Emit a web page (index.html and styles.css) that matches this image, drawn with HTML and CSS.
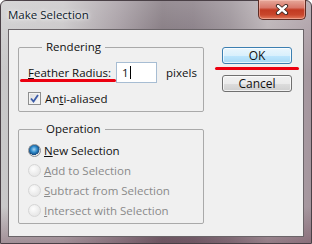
FILE: index.html
```html
<!DOCTYPE html>
<html lang="en">
<head>
  <meta charset="UTF-8">
  <title>Make Selection</title>
  <link rel="stylesheet" href="styles.css">
</head>
<body>
  <div class="window">
    <div class="titlebar">
      <span class="title">Make Selection</span>
      <div class="close">
        <svg width="14" height="11" viewBox="0 0 14 11">
          <path d="M3 2 L11 9 M11 2 L3 9" stroke="#3a2520" stroke-width="4.2" stroke-linecap="round"/>
          <path d="M3 2 L11 9 M11 2 L3 9" stroke="#ffffff" stroke-width="2.4" stroke-linecap="round"/>
        </svg>
      </div>
    </div>

    <div class="client">
      <div class="groups">
        <fieldset class="group render">
          <legend>Rendering</legend>
          <div class="row feather">
            <span class="label"><u>F</u>eather Radius:</span>
            <span class="field">1<span class="caret"></span></span>
            <span class="unit">pixels</span>
          </div>
          <div class="row check-row">
            <span class="checkbox">
              <svg width="9" height="9" viewBox="0 0 9 9">
                <path d="M1 4.5 L3.5 7.5 L8 1" fill="none" stroke="#3b5ba8" stroke-width="1.8"/>
              </svg>
            </span>
            <span>An<u>t</u>i-aliased</span>
          </div>
        </fieldset>

        <fieldset class="group operation">
          <legend>Operation</legend>
          <div class="row radio-row">
            <span class="radio checked"></span>
            <span><u>N</u>ew Selection</span>
          </div>
          <div class="row radio-row disabled">
            <span class="radio"></span>
            <span><u>A</u>dd to Selection</span>
          </div>
          <div class="row radio-row disabled">
            <span class="radio"></span>
            <span><u>S</u>ubtract from Selection</span>
          </div>
          <div class="row radio-row disabled">
            <span class="radio"></span>
            <span><u>I</u>ntersect with Selection</span>
          </div>
        </fieldset>
      </div>

      <div class="buttons">
        <button class="btn default">OK</button>
        <button class="btn">Cancel</button>
      </div>

      <!-- red marker strokes drawn over the dialog -->
      <div class="marker mark-feather"></div>
      <div class="marker mark-ok"></div>
    </div>
  </div>
</body>
</html>
```

FILE: styles.css
```css
* {
  box-sizing: border-box;
}
body {
  margin: 0;
  font-family: 'Open Sans', 'Noto Sans', sans-serif;
  font-size: 11.5px;
  color: #111;
  background: #fff;
}
.window {
  width: 312px;
  height: 244px;
  border: 1px solid #4a4046;
  border-radius: 6px 6px 0 0;
  padding: 0 7px 6px 7px;
  background:
    linear-gradient(180deg, rgba(255,255,255,0.25) 0%, rgba(255,255,255,0) 30%, rgba(0,0,0,0) 85%, rgba(90,40,60,0.35) 100%),
    linear-gradient(90deg, #c9c8c9 0%, #c4c1c3 20%, #9c9299 38%, #766a72 52%, #7a6e77 62%, #8f858c 74%, #b3aaae 86%, #a4959d 100%);
}
.titlebar {
  height: 28px;
  display: flex;
  align-items: flex-start;
  justify-content: space-between;
  margin-right: -2px;
}
.title {
  margin-top: 6px;
  color: #0d1a2a;
  text-shadow: 0 0 6px #fff, 0 0 3px #fff;
}
.close {
  width: 48px;
  height: 20px;
  margin-top: -1px;
  border: 1px solid #5e2c24;
  border-top: none;
  border-radius: 0 0 5px 5px;
  background: linear-gradient(180deg, #e6a89a 0%, #d8786a 40%, #c23a22 52%, #c9462c 78%, #e27a5c 100%);
  box-shadow: inset 0 0 0 1px rgba(255, 210, 200, 0.45);
  display: flex;
  align-items: center;
  justify-content: center;
}
.client {
  position: relative;
  height: 208px;
  border: 1px solid #6a6468;
  background: #f0f0f0;
  display: flex;
  padding: 9px 0 0 9px;
}
.groups {
  width: 186px;
  display: flex;
  flex-direction: column;
  gap: 9px;
}
.group {
  margin: 0;
  padding: 0 0 0 9px;
  border: 1px solid #a9a9a9;
  border-radius: 2px;
}
.group legend {
  margin-left: 14px;
  padding: 0 4px;
  height: 16px;
  line-height: 16px;
}
.render {
  padding-top: 7px;
  padding-bottom: 5px;
}
.operation {
  padding-top: 3px;
  padding-bottom: 3px;
}
.row {
  display: flex;
  align-items: center;
}
.feather {
  height: 21px;
}
.field {
  width: 41px;
  height: 21px;
  margin-left: 5px;
  border: 1px solid #a7bdd3;
  background: #fff;
  padding-left: 5px;
  display: flex;
  align-items: center;
}
.caret {
  display: inline-block;
  width: 1px;
  height: 13px;
  margin-left: 1px;
  background: #000;
}
.unit {
  margin-left: 9px;
}
.check-row {
  height: 16px;
  margin-top: 7px;
  gap: 4px;
}
.checkbox {
  width: 13px;
  height: 13px;
  border: 1px solid #8e8f8f;
  background: linear-gradient(135deg, #dcdcdc 0%, #fafafa 100%);
  box-shadow: inset 0 0 0 1px #f4f4f4;
  display: flex;
  align-items: center;
  justify-content: center;
}
.radio-row {
  height: 20px;
  gap: 3px;
}
.radio {
  width: 13px;
  height: 13px;
  border-radius: 50%;
  border: 1px solid #d6d6d6;
  background: radial-gradient(circle at 40% 35%, #fdfdfd 0%, #e8e8e8 70%);
}
.radio.checked {
  border-color: #8c8f93;
  background: radial-gradient(circle at 45% 40%, #a9d8f5 0%, #2a87c8 35%, #1a4d80 60%, #e6e6e6 64%, #fafafa 100%);
}
.disabled {
  color: #8a8a8a;
}
.buttons {
  margin-left: 18px;
  margin-top: 8px;
  display: flex;
  flex-direction: column;
  gap: 11px;
}
.btn {
  width: 70px;
  height: 17px;
  padding: 0;
  font-family: inherit;
  font-size: 12px;
  line-height: 15px;
  color: #111;
  border: 1px solid #707070;
  border-radius: 3px;
  background: linear-gradient(180deg, #f2f2f2 0%, #ebebeb 50%, #dddddd 51%, #cfcfcf 100%);
  box-shadow: inset 0 0 0 1px rgba(255, 255, 255, 0.7);
}
.btn.default {
  border-color: #3c7fb1;
  background: linear-gradient(180deg, #eaf6fd 0%, #d9f0fc 50%, #bee6fd 51%, #a7d9f5 100%);
}
.marker {
  position: absolute;
  height: 3px;
  border-radius: 2px;
  background: #ec0010;
}
.mark-feather {
  left: 11px;
  top: 49px;
  width: 96px;
}
.mark-ok {
  left: 206px;
  top: 37px;
  width: 84px;
}
```
